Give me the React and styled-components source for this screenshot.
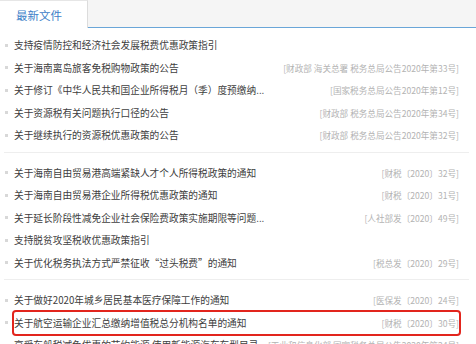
import React from "react";
import styled, { createGlobalStyle } from "styled-components";

const GlobalStyle = createGlobalStyle`
  body {
    margin: 0;
    background: #fff;
    font-family: "Noto Sans CJK SC", "Liberation Sans", sans-serif;
  }
`;

const Panel = styled.div`
  width: 476px;
  height: 344px;
  overflow: hidden;
  background: #fff;
`;

const TabBar = styled.div`
  display: flex;
  height: 27px;
  background: #f5f5f5;
  border-bottom: 1px solid #6aa6d8;
`;

const Tab = styled.div`
  display: flex;
  align-items: center;
  height: 28px;
  margin-bottom: -1px;
  padding: 0 25px 0 16px;
  background: #fff;
  border-top: 1px solid #e6e6e6;
  border-right: 1px solid #dcdcdc;
  box-sizing: border-box;
  color: #4080c8;
  font-size: 11.5px;
`;

const List = styled.div`
  padding: 0 7px 0 4px;
`;

const Group = styled.div`
  padding: 9px 0 5px;
  border-bottom: 1px solid #eeeeee;
  &:first-child {
    padding-top: 6px;
  }
  &:last-child {
    border-bottom: none;
  }
`;

const Item = styled.div`
  display: flex;
  align-items: center;
  height: 22.5px;
  padding: 0 10px 0 1px;
`;

const Bullet = styled.span`
  flex: none;
  width: 3px;
  height: 3px;
  margin-right: 6px;
  background: #d8d8d8;
`;

const Content = styled.div`
  flex: 1;
  display: flex;
  align-items: center;
  justify-content: space-between;
  height: 100%;
  min-width: 0;
  border-radius: 2px;
  box-shadow: ${(p) => (p.$marked ? "0 0 0 2px #e2251d" : "none")};
`;

const Title = styled.span`
  color: #404040;
  font-size: 9.7px;
  white-space: nowrap;
`;

const DocNo = styled.span`
  flex: none;
  color: #b3b3b3;
  font-size: 8.6px;
  white-space: nowrap;
`;

const groups = [
  [
    ["支持疫情防控和经济社会发展税费优惠政策指引", ""],
    ["关于海南离岛旅客免税购物政策的公告", "[财政部 海关总署 税务总局公告2020年第33号]"],
    ["关于修订《中华人民共和国企业所得税月（季）度预缴纳...", "[国家税务总局公告2020年第12号]"],
    ["关于资源税有关问题执行口径的公告", "[财政部 税务总局公告2020年第34号]"],
    ["关于继续执行的资源税优惠政策的公告", "[财政部 税务总局公告2020年第32号]"],
  ],
  [
    ["关于海南自由贸易港高端紧缺人才个人所得税政策的通知", "[财税〔2020〕32号]"],
    ["关于海南自由贸易港企业所得税优惠政策的通知", "[财税〔2020〕31号]"],
    ["关于延长阶段性减免企业社会保险费政策实施期限等问题...", "[人社部发〔2020〕49号]"],
    ["支持脱贫攻坚税收优惠政策指引", ""],
    ["关于优化税务执法方式严禁征收“过头税费”的通知", "[税总发〔2020〕29号]"],
  ],
  [
    ["关于做好2020年城乡居民基本医疗保障工作的通知", "[医保发〔2020〕24号]"],
    ["关于航空运输企业汇总缴纳增值税总分机构名单的通知", "[财税〔2020〕30号]", true],
    ["享受车船税减免优惠的节约能源 使用新能源汽车车型目录...", "[工业和信息化部 国家税务总局公告2020年第24号]"],
  ],
];

export default function App() {
  return (
    <Panel>
      <GlobalStyle />
      <TabBar>
        <Tab>最新文件</Tab>
      </TabBar>
      <List>
        {groups.map((rows, gi) => (
          <Group key={gi}>
            {rows.map(([title, no, marked], i) => (
              <Item key={i}>
                <Bullet />
                <Content $marked={marked}>
                  <Title>{title}</Title>
                  <DocNo>{no}</DocNo>
                </Content>
              </Item>
            ))}
          </Group>
        ))}
      </List>
    </Panel>
  );
}
